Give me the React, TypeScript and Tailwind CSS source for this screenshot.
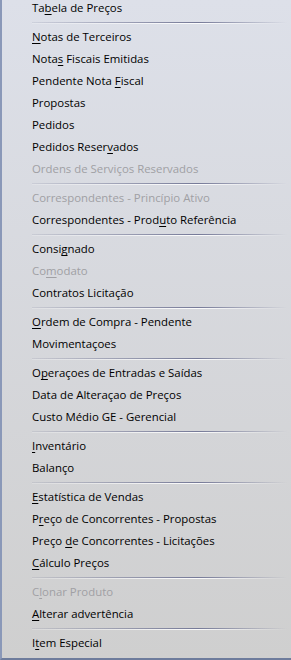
type Item = {
  label: string;
  mn?: number;
  disabled?: boolean;
};

type Entry = Item | "sep";

const ENTRIES: Entry[] = [
  { label: "Tabela de Preços", mn: 2 },
  "sep",
  { label: "Notas de Terceiros", mn: 0 },
  { label: "Notas Fiscais Emitidas", mn: 4 },
  { label: "Pendente Nota Fiscal", mn: 14 },
  { label: "Propostas" },
  { label: "Pedidos" },
  { label: "Pedidos Reservados", mn: 13 },
  { label: "Ordens de Serviços Reservados", disabled: true },
  "sep",
  { label: "Correspondentes - Princípio Ativo", disabled: true },
  { label: "Correspondentes - Produto Referência", mn: 22 },
  "sep",
  { label: "Consignado", mn: 5 },
  { label: "Comodato", mn: 2, disabled: true },
  { label: "Contratos Licitação" },
  "sep",
  { label: "Ordem de Compra - Pendente", mn: 0 },
  { label: "Movimentaçoes" },
  "sep",
  { label: "Operaçoes de Entradas e Saídas", mn: 1 },
  { label: "Data de Alteraçao de Preços" },
  { label: "Custo Médio GE - Gerencial" },
  "sep",
  { label: "Inventário", mn: 0 },
  { label: "Balanço" },
  "sep",
  { label: "Estatística de Vendas", mn: 0 },
  { label: "Preço de Concorrentes - Propostas", mn: 1 },
  { label: "Preço de Concorrentes - Licitações", mn: 6 },
  { label: "Cálculo Preços", mn: 0 },
  "sep",
  { label: "Clonar Produto", mn: 1, disabled: true },
  { label: "Alterar advertência", mn: 0 },
  "sep",
  { label: "Item Especial", mn: 1 },
];

function Label({ item }: { item: Item }) {
  if (item.mn === undefined) {
    return <span>{item.label}</span>;
  }
  const i = item.mn;
  return (
    <span>
      {item.label.slice(0, i)}
      <span className="underline underline-offset-[2px] decoration-1">{item.label[i]}</span>
      {item.label.slice(i + 1)}
    </span>
  );
}

function Separator() {
  return (
    <div className="flex h-[7px] flex-col justify-center pl-[30px] pr-[4px]">
      <div className="h-px bg-[linear-gradient(to_right,rgba(120,124,150,0.15),#767a98_65%,rgba(120,124,150,0))]" />
      <div className="h-px bg-[linear-gradient(to_right,rgba(255,255,255,0.2),rgba(255,255,255,0.9)_65%,rgba(255,255,255,0))]" />
    </div>
  );
}

export default function App() {
  return (
    <div className="h-[660px] w-[291px] overflow-hidden border-b-2 border-l-2 border-b-[#6e7c9c] border-l-[#8a98b8] bg-[linear-gradient(to_bottom,#dde0e9,#cfcfcf)] font-['Open_Sans',sans-serif] text-[11.4px] text-black">
      <div className="-mt-[3px] flex flex-col">
        {ENTRIES.map((entry, idx) =>
          entry === "sep" ? (
            <Separator key={idx} />
          ) : (
            <div
              key={idx}
              className={`flex h-[22px] items-center whitespace-nowrap pl-[30px] ${
                entry.disabled ? "text-[#a0a0a4]" : "text-black"
              }`}
            >
              <Label item={entry} />
            </div>
          )
        )}
      </div>
    </div>
  );
}
